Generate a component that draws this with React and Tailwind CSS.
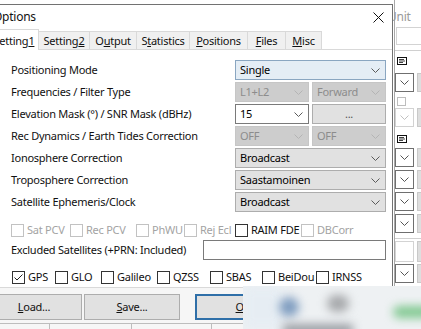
import React from "react";

const Chevron = ({ color = "#5a5a5a" }) => (
  <svg width="9" height="5" viewBox="0 0 9 5" fill="none">
    <path d="M0.5 0.5L4.5 4.5L8.5 0.5" stroke={color} strokeWidth="1" />
  </svg>
);

const comboStyles = {
  normal: "bg-[#e1e1e1] border-[#adadad] text-black",
  hover: "bg-[#e4edf5] border-[#8aa6c1] text-black",
  disabled: "bg-[#cdcdcd] border-[#c6c6c6] text-[#8c8c8c]",
  edit: "bg-white border-[#7a7a7a] text-black",
};

const Combo = ({ value, variant = "normal", className = "" }) => (
  <div
    className={`h-[20px] border flex items-center justify-between pl-[4px] pr-[5px] ${comboStyles[variant]} ${className}`}
  >
    <span>{value}</span>
    <Chevron color={variant === "disabled" ? "#b4b4b4" : "#5a5a5a"} />
  </div>
);

const Check = ({ label, checked, disabled, className = "" }) => (
  <div className={`flex items-center gap-[3px] shrink-0 whitespace-nowrap ${className}`}>
    <div
      className={`w-[13px] h-[13px] border bg-white flex items-center justify-center ${
        disabled ? "border-[#c2c2c2]" : "border-[#333333]"
      }`}
    >
      {checked && (
        <svg width="11" height="11" viewBox="0 0 11 11" fill="none">
          <path d="M1.5 5.5L4 8L9.5 2.5" stroke="#222" strokeWidth="1" />
        </svg>
      )}
    </div>
    <span className={disabled ? "text-[#a3a3a3]" : ""}>{label}</span>
  </div>
);

// label with underlined access key
const Key = ({ text, k }) => {
  const i = text.indexOf(k);
  return (
    <span className="whitespace-nowrap">
      {text.slice(0, i)}
      <u>{k}</u>
      {text.slice(i + 1)}
    </span>
  );
};

const tabs = [
  { text: "Setting2", k: "2", w: "w-[51px]" },
  { text: "Output", k: "u", w: "w-[47px]" },
  { text: "Statistics", k: "t", w: "w-[53px]" },
  { text: "Positions", k: "P", w: "w-[58px]" },
  { text: "Files", k: "F", w: "w-[38px]" },
  { text: "Misc", k: "M", w: "w-[36px]" },
];

const Row = ({ label, children }) => (
  <div className="h-[22px] flex items-center">
    <span className="w-[235px] pl-[11px] shrink-0 whitespace-nowrap">{label}</span>
    <div className="w-[151px] flex gap-[3px]">{children}</div>
  </div>
);

const NoteIcon = () => (
  <svg width="10" height="8" viewBox="0 0 10 8" fill="none">
    <rect x="0.5" y="0.5" width="9" height="7" stroke="#111" />
    <path d="M2 2.5H7M2 4H8M2 5.5H6" stroke="#111" strokeWidth="0.8" />
  </svg>
);

const SideCombo = ({ disabled }) => (
  <div className="h-[19px] flex gap-[3px]">
    <div
      className={`w-[19px] border flex items-center justify-center bg-white ${
        disabled ? "border-[#d2d2d2]" : "border-[#6f6f6f]"
      }`}
    >
      <Chevron color={disabled ? "#c0c0c0" : "#555"} />
    </div>
    <div className="flex-1 bg-[#dedede] border border-r-0 border-[#c9c9c9]" />
  </div>
);

export default function App() {
  return (
    <div className="relative w-[421px] h-[329px] overflow-hidden bg-white flex font-['Noto_Sans',sans-serif] text-[11px] tracking-[-0.25px] leading-[14px] text-[#111]">
      {/* Options dialog */}
      <div className="relative z-10 w-[393px] shrink-0 mt-[4px] border-t border-r border-[#727272] bg-white flex flex-col">
        <div className="h-[25px] flex items-center justify-between">
          <span className="ml-[-7px] text-[12px]">Options</span>
          <svg className="mr-[8px]" width="11" height="11" viewBox="0 0 11 11" fill="none">
            <path d="M0.5 0.5L10.5 10.5M10.5 0.5L0.5 10.5" stroke="#111" strokeWidth="1" />
          </svg>
        </div>

        {/* tabs */}
        <div className="relative z-10 h-[21px] flex items-end ml-[-11px]">
          <div className="w-[50px] h-[21px] bg-white border-x border-t border-[#d9d9d9] flex items-center justify-center pt-[1px]">
            <Key text="Setting1" k="1" />
          </div>
          {tabs.map((t) => (
            <div
              key={t.text}
              className={`${t.w} h-[18px] mb-[1px] bg-[#f0f0f0] border-t border-r border-[#d9d9d9] flex items-center justify-center`}
            >
              <Key text={t.text} k={t.k} />
            </div>
          ))}
        </div>

        {/* panel */}
        <div className="mt-[-1px] border-t border-b border-[#d9d9d9] bg-white pt-[9px] flex flex-col">
          <Row label="Positioning Mode">
            <Combo value="Single" variant="hover" className="w-full" />
          </Row>
          <Row label="Frequencies / Filter Type">
            <Combo value="L1+L2" variant="disabled" className="w-[74px]" />
            <Combo value="Forward" variant="disabled" className="w-[74px]" />
          </Row>
          <Row label="Elevation Mask (°) / SNR Mask (dBHz)">
            <Combo value="15" variant="edit" className="w-[74px]" />
            <div className="w-[74px] h-[20px] border border-[#adadad] bg-[#e1e1e1] flex items-center justify-center text-[#555]">
              ...
            </div>
          </Row>
          <Row label="Rec Dynamics / Earth Tides Correction">
            <Combo value="OFF" variant="disabled" className="w-[74px]" />
            <Combo value="OFF" variant="disabled" className="w-[74px]" />
          </Row>
          <Row label="Ionosphere Correction">
            <Combo value="Broadcast" className="w-full" />
          </Row>
          <Row label="Troposphere Correction">
            <Combo value="Saastamoinen" className="w-full" />
          </Row>
          <Row label="Satellite Ephemeris/Clock">
            <Combo value="Broadcast" className="w-full" />
          </Row>

          <div className="mt-[7px] h-[20px] flex items-center pl-[11px]">
            <Check label="Sat PCV" disabled className="w-[59px]" />
            <Check label="Rec PCV" disabled className="w-[66px]" />
            <Check label="PhWU" disabled className="w-[48px]" />
            <Check label="Rej Ecl" disabled className="w-[51px]" />
            <Check label="RAIM FDE" className="w-[66px]" />
            <Check label="DBCorr" disabled />
          </div>

          <div className="h-[20px] flex items-center">
            <span className="w-[203px] pl-[11px] shrink-0 whitespace-nowrap">Excluded Satellites (+PRN: Included)</span>
            <div className="w-[183px] h-[20px] border border-[#7a7a7a] bg-white" />
          </div>

          <div className="mt-[7px] h-[20px] flex items-center pl-[12px]">
            <Check label="GPS" checked className="w-[43px]" />
            <Check label="GLO" className="w-[46px]" />
            <Check label="Galileo" className="w-[56px]" />
            <Check label="QZSS" className="w-[53px]" />
            <Check label="SBAS" className="w-[52px]" />
            <Check label="BeiDou" className="w-[54px]" />
            <Check label="IRNSS" />
          </div>
        </div>

        {/* buttons */}
        <div className="bg-[#f6f6f6] pt-[6px] flex flex-col">
          <div className="flex items-center gap-[2px] ml-[-14px]">
            <div className="w-[96px] h-[26px] border border-[#adadad] bg-[#e1e1e1] flex items-center justify-center">
              <Key text="Load..." k="L" />
            </div>
            <div className="w-[96px] h-[26px] border border-[#adadad] bg-[#e1e1e1] flex items-center justify-center">
              <Key text="Save..." k="S" />
            </div>
            <div className="ml-[13px] w-[96px] h-[26px] border-2 border-[#2f6fa8] bg-[#e1e1e1] flex items-center justify-center">
              <Key text="OK" k="O" />
            </div>
          </div>
          <div className="mt-[3px] h-[6px] border-t border-[#bdbdbd] flex">
            <div className="w-[50px] border-r border-[#bdbdbd]" />
            <div className="w-[82px] border-r border-[#bdbdbd]" />
            <div className="w-[80px] border-r border-[#bdbdbd]" />
          </div>
        </div>
      </div>

      {/* background window on the right */}
      <div className="ml-[1px] flex-1 border-l border-[#a8a8a8] flex flex-col">
        <div className="h-[10px]" />
        <span className="ml-[-7px] h-[14px] text-[12px] text-[#9a9a9a]">Unit</span>
        <div className="mt-[3px] ml-[1px] h-[18px] border border-r-0 border-[#d3d3d3]" />
        <div className="mt-[5px] h-px bg-[#d0d0d0]" />
        <div className="mt-[6px] ml-[2px] h-[8px] flex">
          <NoteIcon />
        </div>
        <div className="mt-[8px]">
          <SideCombo />
        </div>
        <div className="mt-[5px] ml-[2px] w-[9px] h-[9px] border border-[#bdbdbd]" />
        <div className="mt-[2px]">
          <SideCombo disabled />
        </div>
        <div className="mt-[8px] ml-[2px] h-[8px] flex">
          <NoteIcon />
        </div>
        <div className="mt-[5px] flex flex-col gap-[3px]">
          <SideCombo />
          <SideCombo />
          <SideCombo />
          <SideCombo />
        </div>
        <div className="mt-[5px] h-px bg-[#d0d0d0]" />
        <div className="mt-[2px] h-[21px] flex gap-[3px]">
          <div className="w-[19px] border border-[#d3d3d3] bg-white" />
          <div className="flex-1 bg-[#dedede] border border-r-0 border-[#c9c9c9]" />
        </div>
        <div className="mt-[2px]">
          <SideCombo />
        </div>
      </div>

      {/* blurred window over the bottom right */}
      <div className="absolute left-[243px] top-[286px] right-0 bottom-0 z-20 overflow-hidden bg-[#eef1f3]">
        <div className="absolute left-0 top-0 w-[40px] h-full bg-[#e6edf3] blur-[6px]" />
        <div className="absolute left-[36px] top-[11px] w-[20px] h-[20px] rounded-full bg-[#7f9dc0] blur-[5px]" />
        <div className="absolute left-[84px] top-[9px] w-[22px] h-[17px] rounded-full bg-[#a6a8ab] blur-[5px]" />
        <div className="absolute left-[150px] top-[20px] w-[40px] h-[12px] rounded-full bg-[#80c890] blur-[5px]" />
        <div className="absolute left-[40px] top-[38px] w-[70px] h-[12px] bg-[#9a9ea4] blur-[5px]" />
      </div>
    </div>
  );
}
